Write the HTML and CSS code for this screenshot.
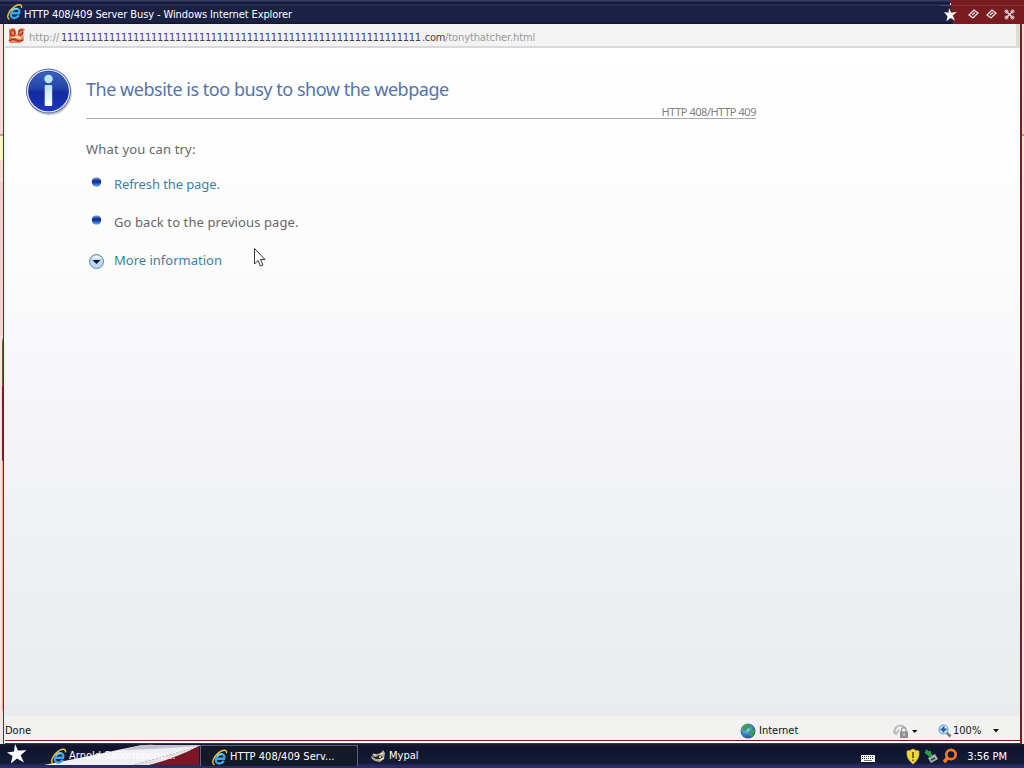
FILE: index.html
```html
<!DOCTYPE html>
<html lang="en">
<head>
  <meta charset="UTF-8">
  <title>HTTP 408/409 Server Busy</title>
  <link rel="stylesheet" href="styles.css">
</head>
<body>
  <svg class="defs" width="0" height="0">
    <defs>
      <linearGradient id="ball" x1="0" y1="0" x2="0" y2="1">
        <stop offset="0" stop-color="#3a62bc"/>
        <stop offset=".4" stop-color="#2448ac"/>
        <stop offset=".55" stop-color="#1229a0"/>
        <stop offset="1" stop-color="#1b36c0"/>
      </linearGradient>
      <linearGradient id="bullet" x1="0" y1="0" x2="0" y2="1">
        <stop offset="0" stop-color="#9dbdf0"/>
        <stop offset=".3" stop-color="#1c429f"/>
        <stop offset=".5" stop-color="#0f2f98"/>
        <stop offset="1" stop-color="#6fb0fa"/>
      </linearGradient>
      <linearGradient id="stem" x1="0" y1="0" x2="0" y2="1">
        <stop offset="0" stop-color="#b9e4f5"/>
        <stop offset="1" stop-color="#fff"/>
      </linearGradient>
      <radialGradient id="globe" cx=".4" cy=".35" r=".7">
        <stop offset="0" stop-color="#b8e4fa"/>
        <stop offset=".5" stop-color="#3f88cc"/>
        <stop offset="1" stop-color="#174a88"/>
      </radialGradient>
      <symbol id="ie" viewBox="0 0 18 18">
        <path d="M13.600 12.600Q11.500 15.600 8.500 15.400Q4.500 14.800 5.300 10.500Q6.500 5.500 11 5.500Q15.200 6 13.800 10.300H5.500" fill="none" stroke="#3aa6ec" stroke-width="2.500"/>
        <path d="M6.500 7.500Q8.500 4.800 12.300 5.300" fill="none" stroke="#b4e8fc" stroke-width="1"/>
        <path d="M3.800 16.800C-.5 15.500 3 7.500 8.500 3.600C12.500 .6 17.500 .2 16.300 4.600" fill="none" stroke="#f0c23c" stroke-width="1.500"/>
      </symbol>
      <symbol id="star" viewBox="0 0 20 20">
        <path d="M8 0L11 6.600L19.500 6.200L13.600 11.200L17 18.600L10 14.400L3.800 19.500L5.600 12L0 8.500L7 7.500Z" fill="#fff"/>
      </symbol>
    </defs>
  </svg>

  <header class="titlebar">
    <svg class="ie-icon" width="17" height="20" viewBox="0 0 18 18"><use href="#ie"/></svg>
    <span class="title">HTTP 408/409 Server Busy - Windows Internet Explorer</span>
    <div class="controls">
      <svg width="84" height="24" viewBox="0 0 84 24">
        <path d="M10 0H84V24H13Z" fill="#781c22"/>
        <path d="M0 5.500H84" stroke="#96474f" stroke-opacity=".5"/>
        <path d="M9 8L11.300 12.700L17 12L12.700 15.500L15 20.500L10.600 18L6.500 21.300L7.400 16.300L4 12L8.500 12.700Z" fill="#fff"/>
        <path d="M10.500 3v2" stroke="#ddd"/>
        <g fill="none" stroke="#f3e4df" stroke-width="1.300">
          <path d="M29 15L34 10L38 13L33 18ZM32 15L35 12.500"/>
          <path d="M47 15L52 10L56 13L51 18ZM50 15L53 12.500"/>
          <path d="M66 11L73 18M73 11L66 18"/>
          <circle cx="66.500" cy="11.500" r="1.500" stroke-width="1"/>
          <circle cx="72.500" cy="11.500" r="1.500" stroke-width="1"/>
          <circle cx="66.500" cy="17.500" r="1.500" stroke-width="1"/>
          <circle cx="72.500" cy="17.500" r="1.500" stroke-width="1"/>
        </g>
      </svg>
    </div>
  </header>

  <div class="middle">
    <div class="edge-left"></div>
    <main class="window">
      <div class="address">
        <svg width="18" height="17" viewBox="0 0 18 17">
          <path d="M1 2L6 1L8 4L13 1L17 2L15 6L16 13L12 16L2 16L1 12Z" fill="#ec8558"/>
          <path d="M6 3Q1 3 3 8Q7 10 7 6ZM15 3Q10 3 10 7Q14 9 15 5" fill="none" stroke="#b53a22" stroke-width="1.500"/>
          <path d="M9 3V8M4 11L8 10L13 11" fill="none" stroke="#ffe3bd" stroke-width="1.800"/>
          <path d="M1 14Q5 11 8 13T15 13" fill="none" stroke="#b72f2b" stroke-width="1.700"/>
        </svg>
        <span class="url"><span class="scheme">http://</span><span class="ones">111111111111111111111111111111111111111111111111111111111111</span><span class="domain">.com</span><span class="path">/tonythatcher.html</span></span>
      </div>
      <div class="page">
        <svg class="info" width="50" height="52" viewBox="0 0 50 52">
          <circle cx="25.500" cy="26" r="22.300" fill="#c9c9ce"/>
          <circle cx="24.500" cy="24" r="22.500" fill="#52629d"/>
          <circle cx="24.500" cy="24" r="21.600" fill="#dfe4f4"/>
          <circle cx="24.500" cy="24" r="20.300" fill="#14289c"/>
          <circle cx="24.500" cy="24" r="19.800" fill="url(#ball)"/>
          <circle cx="24.500" cy="12" r="4.200" fill="#bce6f5"/>
          <rect x="20.700" y="18" width="7.500" height="21" rx="1" fill="url(#stem)"/>
        </svg>
        <div class="message">
          <h1>The website is too busy to show the webpage</h1>
          <div class="code"><span>HTTP 408/HTTP 409</span></div>
          <p class="try">What you can try:</p>
          <ul class="actions">
            <li>
              <svg width="28" height="20" viewBox="0 0 28 20"><ellipse cx="10.500" cy="8" rx="4.700" ry="4.800" fill="url(#bullet)"/></svg>
              <a class="refresh">Refresh the page.</a>
            </li>
            <li>
              <svg width="28" height="20" viewBox="0 0 28 20"><ellipse cx="10.500" cy="8" rx="4.700" ry="4.800" fill="url(#bullet)"/></svg>
              <span class="back">Go back to the previous page.</span>
            </li>
            <li>
              <svg width="28" height="20" viewBox="0 0 28 20">
                <circle cx="10.500" cy="11.500" r="7" fill="#b9d9f1" stroke="#6688a8"/>
                <path d="M5 8.500Q10.500 3 16 8.500Z" fill="#edf5fb"/>
                <path d="M6.500 10H14.500L10.500 14Z" fill="#08192f"/>
              </svg>
              <a class="more">More information</a>
            </li>
          </ul>
        </div>
      </div>
      <footer class="status">
        <span class="done">Done</span>
        <div class="zone">
          <svg width="16" height="16" viewBox="0 0 16 16">
            <circle cx="8" cy="8" r="7.500" fill="url(#globe)"/>
            <path d="M7 1L11 2L10 5L7 6L6 9L3 7L2 4ZM10 7L14 6L15 9L12 14L9 12Z" fill="#3d9c51"/>
          </svg>
          <span>Internet</span>
        </div>
        <div class="privacy">
          <svg width="25" height="16" viewBox="0 0 25 16">
            <path d="M2 9A5.500 5.500 0 0 1 12 5M0 8L3 11L6 7" fill="none" stroke="#bbb" stroke-width="2"/>
            <path d="M8.500 9V6.500A2.300 2.300 0 0 1 13 6.500V9" fill="none" stroke="#999" stroke-width="1.300"/>
            <rect x="7" y="8.500" width="8" height="6.500" fill="#909090"/>
            <path d="M11 10V13" stroke="#eee"/>
            <path d="M19 7H24.500L21.700 10Z" fill="#111"/>
          </svg>
        </div>
        <div class="zoom">
          <svg width="14" height="14" viewBox="0 0 14 14">
            <path d="M8 8L12.500 12.500" stroke="#8c7368" stroke-width="2.500"/>
            <circle cx="5.500" cy="5.500" r="4.500" fill="#d9efff" stroke="#6b9fd0" stroke-width="1.200"/>
            <path d="M5.500 2.500V8.500M2.500 5.500H8.500" stroke="#1e5a9f" stroke-width="2"/>
          </svg>
          <span>100%</span>
          <svg class="arrow" width="6" height="4" viewBox="0 0 6 4"><path d="M0 0H6L3 3.500Z" fill="#111"/></svg>
        </div>
      </footer>
    </main>
    <div class="edge-right"></div>
  </div>

  <nav class="taskbar">
    <div class="start"><svg width="20" height="20"><use href="#star"/></svg></div>
    <div class="task sail">
      <svg class="sail-bg" width="156" height="24" viewBox="0 0 156 24">
        <path d="M0 21L40 13L88 3Q100 0 112 1H156V2L90 21Z" fill="#f0f0f4"/>
        <path d="M78 6L98 1H156V2L110 5Z" fill="#c4c2cc"/>
        <path d="M155 2V21H105Q130 15 155 2Z" fill="#7d1624"/>
        <path d="M90 21L155 2Q130 15 105 21Z" fill="#e9e0e3"/>
      </svg>
      <svg class="ie-icon" width="17" height="17"><use href="#ie"/></svg>
      <span>Arnold Sailormoone...</span>
    </div>
    <div class="task active">
      <svg class="ie-icon" width="17" height="17"><use href="#ie"/></svg>
      <span>HTTP 408/409 Serv...</span>
    </div>
    <div class="task mypal">
      <svg width="15" height="13" viewBox="0 0 15 13">
        <path d="M0 6L6 4L10 3L12 0L14 3L13 9L9 12L4 11L1 9Z" fill="#b5aa8f"/>
        <path d="M0 6L5 7L8 5L12 7L9 9L5 9Z" fill="#252520"/>
        <path d="M2 4L5 5M9 10L13 8M9 4L12 3" stroke="#f4efda" stroke-width="1.300"/>
        <circle cx="9" cy="7" r="1" fill="#fff"/>
      </svg>
      <span>Mypal</span>
    </div>
    <div class="tray">
      <svg class="keyboard" width="14" height="7" viewBox="0 0 14 7">
        <rect width="14" height="7" fill="#fff"/>
        <path d="M1 1.500H13M1 3.500H13" stroke="#333" stroke-dasharray="1 1"/>
        <path d="M3 5.500H11" stroke="#777"/>
      </svg>
      <svg width="52" height="17" viewBox="0 0 52 17">
        <path d="M7 1Q10 3 13 3Q14 11 7 16Q0 11 1 3Q4 3 7 1Z" fill="#f4d928" stroke="#c7b765" stroke-width=".7"/>
        <path d="M7 4V10M7 11.500V13" stroke="#47431b" stroke-width="1.500"/>
        <path d="M22 10L29 6L32 11L25 15Z" fill="#a9b5ad"/>
        <path d="M19 4L24 8V3M20 2L26 8" fill="none" stroke="#25a348" stroke-width="2"/>
        <path d="M25 12L29 10" stroke="#334" stroke-width="1.500"/>
        <circle cx="45" cy="6.500" r="4.700" fill="none" stroke="#f47a20" stroke-width="2.700"/>
        <path d="M41.500 10L38 14" stroke="#f47a20" stroke-width="3.500"/>
      </svg>
      <span class="clock">3:56 PM</span>
    </div>
  </nav>

  <svg class="cursor" width="14" height="21" viewBox="0 0 14 21">
    <path d="M1.500 1.500V17L5 13.500L7.500 19L10 18L7.500 12.500H12Z" fill="#fff" stroke="#333"/>
  </svg>
</body>
</html>
```

FILE: styles.css
```css
* {
  box-sizing: border-box;
}
body {
  margin: 0;
  width: 1024px;
  height: 768px;
  overflow: hidden;
  display: flex;
  flex-direction: column;
  font-family: "DejaVu Sans Condensed", "DejaVu Sans", sans-serif;
  font-stretch: condensed;
  font-size: 11px;
  line-height: 14px;
  color: #111;
}
svg {
  display: block;
  flex: none;
}
span, a, h1, p {
  white-space: nowrap;
}
.defs {
  position: absolute;
}
.titlebar {
  height: 24px;
  flex: none;
  display: flex;
  align-items: center;
  padding: 6px 0 0 6px;
  background: linear-gradient(#343b64 0, #343b64 1px, #171d3d 2px, #151a39 4px, #343c62 5px, #1b2145 6px, #1b2145 22px, #10142c 24px);
  color: #fff;
}
.titlebar .ie-icon {
  margin-top: -7px;
}
.title {
  margin-left: 1px;
  letter-spacing: -0.1px;
}
.controls {
  margin-left: auto;
  margin-top: -6px;
}
.middle {
  flex: 1;
  display: flex;
  min-height: 0;
}
.edge-left {
  width: 5px;
  background:
    linear-gradient(90deg, transparent 3px, #7e1b24 3px, #7e1b24 4px, #f4f0ee 4px),
    linear-gradient(90deg, #f6e4e0 2px, transparent 2px) 0 313px / 100% 380px no-repeat,
    linear-gradient(#f6dede 0, #f6d8da 110px, #8a4a52 111px, #fdf3c8 112px, #fdf3c8 136px, #f3d6d2 137px, #f4dcd6 158px, #f2cccc 159px, #f3d5d2 312px, #fff 313px, #6b6224 317px, #6b6224 362px, #5f1f2b 363px, #5f1f2b 436px, #eab578 437px, #eab578 686px, #f2e6e8 688px);
}
.edge-right {
  width: 4px;
  background:
    linear-gradient(90deg, #7e1b24 2px, transparent 2px),
    linear-gradient(#f0dcd9 0, #eed2d6 110px, #8a5058 111px, #fdebc4 112px, #f7dede 160px, #f1e3e6 100%);
}
.window {
  flex: 1;
  display: flex;
  flex-direction: column;
  border-bottom: 4px double #711b20;
}
.address {
  height: 24px;
  flex: none;
  display: flex;
  align-items: center;
  padding-left: 3px;
  background: #f3f3f3;
  border-bottom: 2px solid #d9d9d7;
  border-right: 4px solid #dedbd1;
}
.url {
  display: flex;
  margin-left: 3px;
  padding-top: 5px;
  color: #999;
}
.scheme {
  width: 32px;
}
.ones {
  width: 361px;
  letter-spacing: -0.3px;
  color: #444;
}
.domain {
  width: 23px;
  letter-spacing: -0.3px;
  color: #444;
}
.path {
  letter-spacing: -0.1px;
}
.page {
  flex: 1;
  display: flex;
  align-items: flex-start;
  padding: 19px 0 0 19px;
  background: linear-gradient(#fff 0, #fcfcfd 200px, #f1f2f5 450px, #e9ebee 100%);
  font-family: "Noto Sans", "Open Sans", sans-serif;
  font-stretch: normal;
}
.message {
  width: 670px;
  margin-left: 12px;
}
h1 {
  margin: 9px 0 0;
  font-size: 18px;
  font-weight: normal;
  line-height: 26px;
  letter-spacing: -0.47px;
  color: #5573ab;
}
.code {
  display: flex;
  justify-content: flex-end;
  height: 17px;
  border-bottom: 1px solid #a9abb0;
  font-size: 11px;
  line-height: 20px;
  letter-spacing: -0.45px;
  color: #808080;
}
.try {
  margin: 20px 0 0;
  font-size: 13px;
  line-height: 20px;
  letter-spacing: 0.18px;
  color: #666;
}
.actions {
  list-style: none;
  margin: 15px 0 0;
  padding: 0;
  font-size: 13px;
  line-height: 20px;
  color: #666;
}
.actions li {
  display: flex;
  height: 38px;
}
.actions a {
  color: #3c82a0;
}
.refresh {
  letter-spacing: -0.1px;
}
.back {
  letter-spacing: 0.1px;
}
.status {
  height: 24px;
  flex: none;
  display: flex;
  align-items: center;
  padding-top: 5px;
  background: #f2f2f1;
}
.done {
  width: 735px;
}
.zone {
  display: flex;
  align-items: center;
  gap: 3px;
  width: 153px;
}
.privacy {
  width: 45px;
}
.zoom {
  display: flex;
  align-items: center;
  gap: 1px;
}
.arrow {
  margin-left: 11px;
}
.taskbar {
  height: 24px;
  flex: none;
  display: flex;
  background: linear-gradient(#171b38 0, #10142c 3px, #151b38 19px, #292d66 22px, #292d66 24px);
  color: #fff;
}
.start {
  width: 44px;
  padding-left: 7px;
}
.task {
  position: relative;
  display: flex;
  align-items: center;
  gap: 2px;
  padding-left: 6px;
}
.sail {
  width: 156px;
}
.sail-bg {
  position: absolute;
  left: 0;
  top: 0;
}
.sail .ie-icon, .sail span {
  position: relative;
}
.active {
  width: 158px;
  height: 21px;
  margin-top: 1px;
  padding: 2px 0 0 10px;
  background: #131927;
  border: 1px solid #5d6080;
  border-bottom: 0;
}
.active span {
  letter-spacing: 0.05px;
}
.mypal {
  padding-left: 13px;
  gap: 3px;
}
.tray {
  display: flex;
  align-items: center;
  margin-left: auto;
  padding-right: 17px;
}
.keyboard {
  margin: 4px 31px 0 0;
}
.clock {
  margin-left: 9px;
  padding-top: 1px;
}
.cursor {
  position: absolute;
  left: 253px;
  top: 247px;
}
```
